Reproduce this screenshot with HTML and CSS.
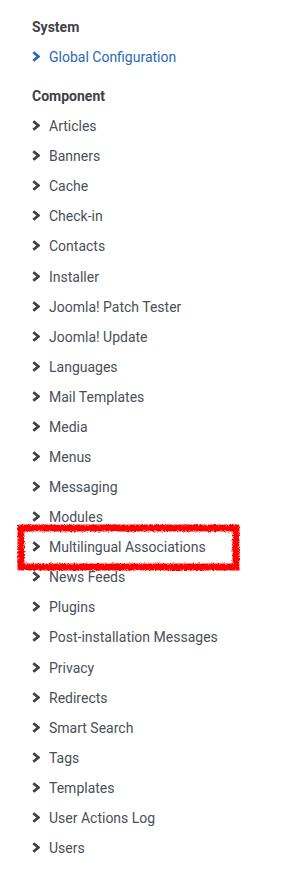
FILE: index.html
```html
<!DOCTYPE html>
<html>
<head>
<meta charset="utf-8">
<link rel="stylesheet" href="styles.css">
</head>
<body>
<div class="panel">
  <h3 class="group-title">System</h3>
  <ul class="menu">
    <li class="item active"><svg class="chev" viewBox="0 0 8 11"><path d="M1.3 1.2 L6.4 5.5 L1.3 9.8" /></svg><span>Global Configuration</span></li>
  </ul>
  <h3 class="group-title">Component</h3>
  <ul class="menu">
    <li class="item"><svg class="chev" viewBox="0 0 8 11"><path d="M1.3 1.2 L6.4 5.5 L1.3 9.8" /></svg><span>Articles</span></li>
    <li class="item"><svg class="chev" viewBox="0 0 8 11"><path d="M1.3 1.2 L6.4 5.5 L1.3 9.8" /></svg><span>Banners</span></li>
    <li class="item"><svg class="chev" viewBox="0 0 8 11"><path d="M1.3 1.2 L6.4 5.5 L1.3 9.8" /></svg><span>Cache</span></li>
    <li class="item"><svg class="chev" viewBox="0 0 8 11"><path d="M1.3 1.2 L6.4 5.5 L1.3 9.8" /></svg><span>Check-in</span></li>
    <li class="item"><svg class="chev" viewBox="0 0 8 11"><path d="M1.3 1.2 L6.4 5.5 L1.3 9.8" /></svg><span>Contacts</span></li>
    <li class="item"><svg class="chev" viewBox="0 0 8 11"><path d="M1.3 1.2 L6.4 5.5 L1.3 9.8" /></svg><span>Installer</span></li>
    <li class="item"><svg class="chev" viewBox="0 0 8 11"><path d="M1.3 1.2 L6.4 5.5 L1.3 9.8" /></svg><span>Joomla! Patch Tester</span></li>
    <li class="item"><svg class="chev" viewBox="0 0 8 11"><path d="M1.3 1.2 L6.4 5.5 L1.3 9.8" /></svg><span>Joomla! Update</span></li>
    <li class="item"><svg class="chev" viewBox="0 0 8 11"><path d="M1.3 1.2 L6.4 5.5 L1.3 9.8" /></svg><span>Languages</span></li>
    <li class="item"><svg class="chev" viewBox="0 0 8 11"><path d="M1.3 1.2 L6.4 5.5 L1.3 9.8" /></svg><span>Mail Templates</span></li>
    <li class="item"><svg class="chev" viewBox="0 0 8 11"><path d="M1.3 1.2 L6.4 5.5 L1.3 9.8" /></svg><span>Media</span></li>
    <li class="item"><svg class="chev" viewBox="0 0 8 11"><path d="M1.3 1.2 L6.4 5.5 L1.3 9.8" /></svg><span>Menus</span></li>
    <li class="item"><svg class="chev" viewBox="0 0 8 11"><path d="M1.3 1.2 L6.4 5.5 L1.3 9.8" /></svg><span>Messaging</span></li>
    <li class="item"><svg class="chev" viewBox="0 0 8 11"><path d="M1.3 1.2 L6.4 5.5 L1.3 9.8" /></svg><span>Modules</span></li>
    <li class="item highlighted"><svg class="chev" viewBox="0 0 8 11"><path d="M1.3 1.2 L6.4 5.5 L1.3 9.8" /></svg><span>Multilingual Associations</span><svg class="marker" viewBox="0 0 223 47" preserveAspectRatio="none"><defs><filter id="rough" x="-5%" y="-20%" width="110%" height="140%"><feTurbulence type="fractalNoise" baseFrequency="1.2" numOctaves="2" seed="3"/><feDisplacementMap in="SourceGraphic" scale="4"/></filter></defs><rect x="4" y="4" width="215" height="39" fill="none" stroke="#f00" stroke-width="7" filter="url(#rough)"/></svg></li>
    <li class="item"><svg class="chev" viewBox="0 0 8 11"><path d="M1.3 1.2 L6.4 5.5 L1.3 9.8" /></svg><span>News Feeds</span></li>
    <li class="item"><svg class="chev" viewBox="0 0 8 11"><path d="M1.3 1.2 L6.4 5.5 L1.3 9.8" /></svg><span>Plugins</span></li>
    <li class="item"><svg class="chev" viewBox="0 0 8 11"><path d="M1.3 1.2 L6.4 5.5 L1.3 9.8" /></svg><span>Post-installation Messages</span></li>
    <li class="item"><svg class="chev" viewBox="0 0 8 11"><path d="M1.3 1.2 L6.4 5.5 L1.3 9.8" /></svg><span>Privacy</span></li>
    <li class="item"><svg class="chev" viewBox="0 0 8 11"><path d="M1.3 1.2 L6.4 5.5 L1.3 9.8" /></svg><span>Redirects</span></li>
    <li class="item"><svg class="chev" viewBox="0 0 8 11"><path d="M1.3 1.2 L6.4 5.5 L1.3 9.8" /></svg><span>Smart Search</span></li>
    <li class="item"><svg class="chev" viewBox="0 0 8 11"><path d="M1.3 1.2 L6.4 5.5 L1.3 9.8" /></svg><span>Tags</span></li>
    <li class="item"><svg class="chev" viewBox="0 0 8 11"><path d="M1.3 1.2 L6.4 5.5 L1.3 9.8" /></svg><span>Templates</span></li>
    <li class="item"><svg class="chev" viewBox="0 0 8 11"><path d="M1.3 1.2 L6.4 5.5 L1.3 9.8" /></svg><span>User Actions Log</span></li>
    <li class="item"><svg class="chev" viewBox="0 0 8 11"><path d="M1.3 1.2 L6.4 5.5 L1.3 9.8" /></svg><span>Users</span></li>
  </ul>
</div>
</body>
</html>
```
FILE: styles.css
```css
html, body {
  margin: 0;
  padding: 0;
  background: #fff;
}
body {
  font-family: Roboto, "Liberation Sans", sans-serif;
  font-size: 14px;
  color: #495057;
}
.panel {
  padding: 12px 0 0 32px;
}
.group-title {
  margin: 0;
  font-size: 14px;
  font-weight: 700;
  line-height: 30px;
  color: #3d4248;
}
.menu {
  list-style: none;
  margin: 0 0 9px 0;
  padding: 0;
}
.item {
  position: relative;
  display: flex;
  align-items: center;
  height: 30.08px;
  line-height: 30px;
}
.chev {
  width: 8px;
  height: 11px;
  margin: -1px 9px 0 0;
  flex: none;
}
.chev path {
  fill: none;
  stroke: #3d4248;
  stroke-width: 2.8;
  stroke-linecap: butt;
  stroke-linejoin: miter;
}
.item.active {
  color: #2a69b8;
}
.item.active .chev path {
  stroke: #2a69b8;
}
.marker {
  position: absolute;
  left: -15px;
  top: -8px;
  width: 223px;
  height: 47px;
  pointer-events: none;
}
```
